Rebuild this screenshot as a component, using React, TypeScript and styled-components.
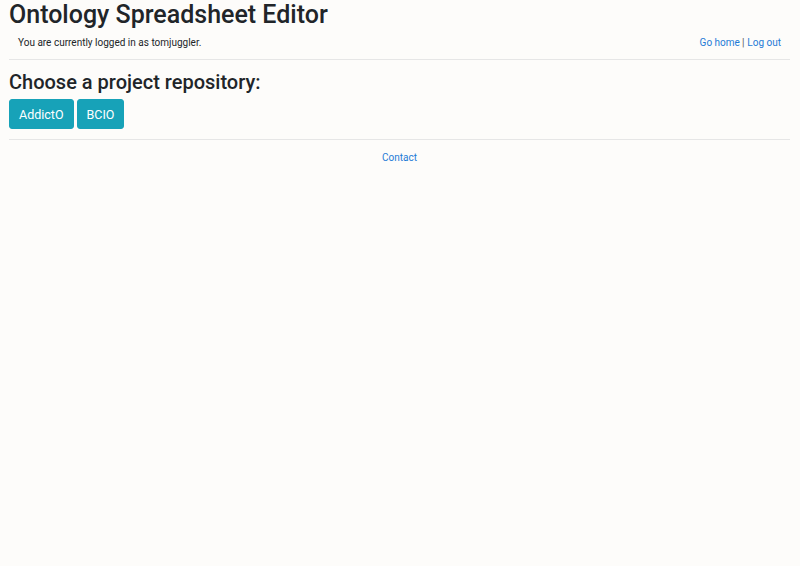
import React from "react";
import styled, { createGlobalStyle } from "styled-components";

const Global = createGlobalStyle`
  html, body { margin: 0; padding: 0; background: #fdfcfa; }
  body { font-family: Roboto, "Liberation Sans", sans-serif; color: #212529; }
`;

const Page = styled.div`
  padding: 0 10px 0 9px;
  min-height: 566px;
  box-sizing: border-box;
`;

const Title = styled.h1`
  margin: 0;
  font-size: 25px;
  font-weight: 500;
  line-height: 30px;
  color: #212529;
`;

const UserBar = styled.div`
  display: flex;
  justify-content: space-between;
  align-items: center;
  padding: 5px 9px 9px 9px;
  font-size: 10px;
  line-height: 15px;
  border-bottom: 1px solid #e6e6e6;
`;

const Link = styled.a`
  color: #1e7bd6;
  text-decoration: none;
`;

const Sep = styled.span`
  color: #555;
  margin: 0 3px 0 2px;
`;

const Heading = styled.h2`
  margin: 10px 0 5px;
  font-size: 20px;
  font-weight: 500;
  line-height: 24px;
`;

const ButtonRow = styled.div`
  display: flex;
  gap: 3px;
  padding-bottom: 10px;
  border-bottom: 1px solid #e6e6e6;
`;

const RepoButton = styled.button`
  background: #17a2b8;
  color: #fff;
  border: 1px solid #17a2b8;
  border-radius: 3px;
  font-family: inherit;
  font-weight: 400;
  font-size: 12.5px;
  height: 30px;
  padding: 0 9px;
  cursor: pointer;
`;

const Footer = styled.div`
  text-align: center;
  font-size: 10px;
  line-height: 15px;
  padding-top: 10px;
`;

export default function App() {
  return (
    <>
      <Global />
      <Page>
        <Title>Ontology Spreadsheet Editor</Title>
        <UserBar>
          <span>You are currently logged in as tomjuggler.</span>
          <span>
            <Link href="#">Go home</Link>
            <Sep>|</Sep>
            <Link href="#">Log out</Link>
          </span>
        </UserBar>
        <Heading>Choose a project repository:</Heading>
        <ButtonRow>
          <RepoButton>AddictO</RepoButton>
          <RepoButton>BCIO</RepoButton>
        </ButtonRow>
        <Footer>
          <Link href="#">Contact</Link>
        </Footer>
      </Page>
    </>
  );
}
